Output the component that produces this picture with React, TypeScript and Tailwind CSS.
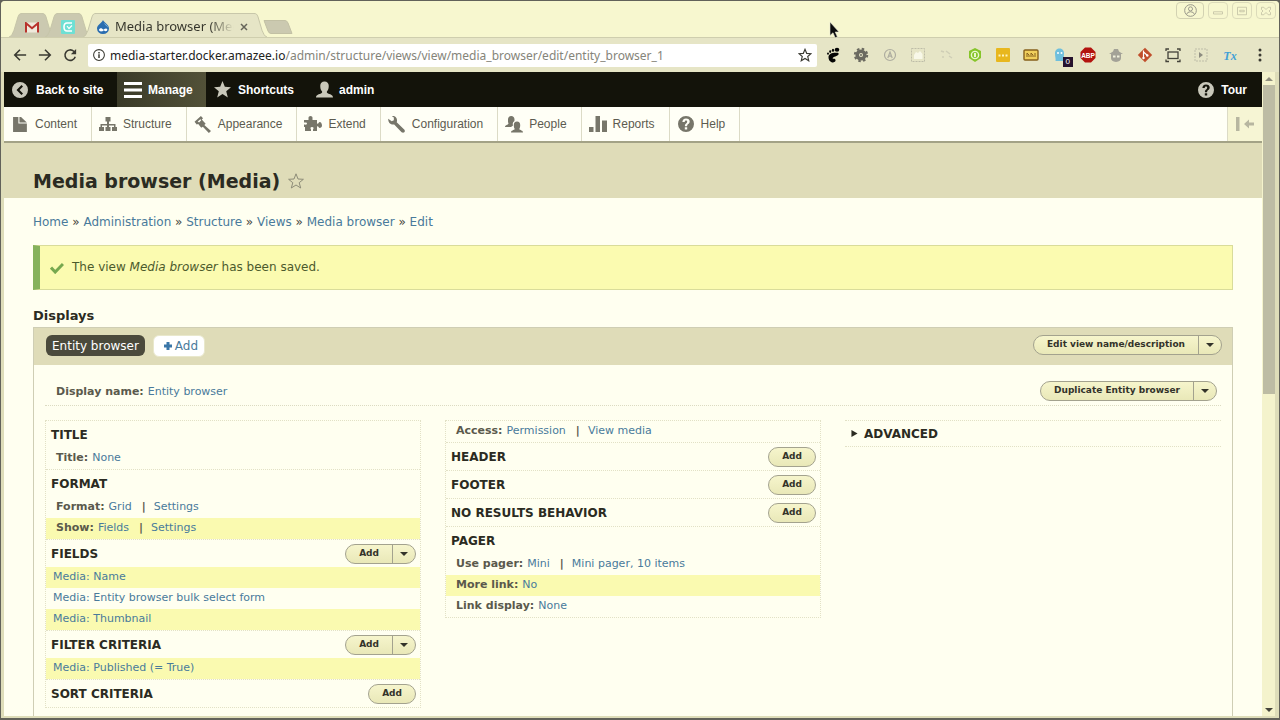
import type { ReactNode } from "react";

type IconProps = { children: ReactNode; className?: string; box?: string };

function Svg({ children, className = "size-4", box = "0 0 16 16" }: IconProps) {
  return (
    <svg viewBox={box} className={`${className} shrink-0`} fill="currentColor" aria-hidden="true">
      {children}
    </svg>
  );
}

function TabShape({ width, fill }: { width: number; fill: string }) {
  return (
    <svg
      viewBox={`0 0 ${width} 25`}
      preserveAspectRatio="none"
      className="absolute inset-0 size-full"
      aria-hidden="true"
    >
      <path
        d={`M0 25 C3 24 3 22 5 18 L9 4 C10 1 11 .5 13 .5 H${width - 13} C${width - 11} .5 ${width - 10} 1 ${width - 9} 4 L${width - 5} 18 C${width - 3} 22 ${width - 3} 24 ${width} 25`}
        fill={fill}
        stroke="#c6c5a8"
      />
    </svg>
  );
}

function TabStrip() {
  return (
    <div className="flex h-[37px] items-end border-b border-[#cfceae] bg-[#f7f7cf] pl-2">
      <button aria-label="Gmail" className="relative flex h-6 w-[46px] items-center justify-center pt-1">
        <TabShape width={46} fill="#cbc9b0" />
        <Svg className="relative h-[11px] w-[14px]" box="0 0 14 11">
          <rect x=".5" y=".5" width="13" height="10" rx="1" fill="#efe9dc" />
          <path d="M1 10.500V1.200L7 6.300L13 1.200V10.500" fill="none" stroke="#b8322c" strokeWidth="2" />
        </Svg>
      </button>
      <button aria-label="Chat" className="relative -ml-2.5 flex h-6 w-[46px] items-center justify-center pt-1">
        <TabShape width={46} fill="#cbc9b0" />
        <Svg className="relative size-[14px]" box="0 0 14 14">
          <rect width="14" height="14" rx="1" fill="#6fe0d4" />
          <path d="M11 3H6Q3 3 3 7T6 11H11" fill="none" stroke="#fff" strokeWidth="1.600" />
          <path d="M6 6l2 2.500L11 5.500" fill="none" stroke="#fff" strokeWidth="1.200" />
        </Svg>
      </button>
      <div className="relative -ml-2 flex h-6 w-[184px] items-center pt-1 pl-[13px] font-['Noto_Sans',sans-serif]">
        <TabShape width={184} fill="#e6e5c6" />
        <Svg className="relative size-[14px]" box="0 0 14 14">
          <path d="M7 0C8 2.500 13 4.500 13 8.500A6 5.500 0 0 1 1 8.500C1 5 6 3 7 0Z" fill="#2a6db0" />
          <path d="M3 9.500c1.500-2 3-1 4.500.3C9 8.500 10.500 8 11.300 9.300c.3 2-2 2.500-3.500 1C6.300 12 3 12 3 9.500Z" fill="#fff" />
          <path d="M8 2.500c1 2 4 3 4.300 5.200C10.500 5.500 8.500 5 8 2.500Z" fill="#8fc0e6" />
        </Svg>
        <span className="relative ml-[5px] bg-linear-to-r from-[#33332a] from-75% to-transparent to-95% bg-clip-text text-[13px] whitespace-nowrap text-transparent">
          Media browser (Med
        </span>
        <button aria-label="Close tab" className="relative mr-5 ml-auto text-[#66655a]">
          <Svg className="size-2">
            <path d="M2 2L14 14M14 2L2 14" stroke="currentColor" strokeWidth="3" />
          </Svg>
        </button>
      </div>
      <button aria-label="New tab" className="mb-[3px] -ml-1 h-3.5 w-[30px]">
        <svg viewBox="0 0 30 14" className="size-full" aria-hidden="true">
          <path d="M1 .5H22Q24 .5 25 3L29 13.500H8Q6 13.500 5 11Z" fill="#cbc9b0" stroke="#c2c0a4" />
        </svg>
      </button>
      <div className="mb-[18px] ml-auto flex gap-1 self-end pr-[3px] text-[#bdbca0]">
        <button aria-label="Profile" className="flex h-[17px] w-7 items-center justify-center rounded-sm border border-[#d3d2b2]">
          <Svg className="size-[13px] text-[#98978a]">
            <circle cx="8" cy="8" r="7.200" fill="none" stroke="currentColor" strokeWidth="1.200" />
            <circle cx="8" cy="6" r="2.500" fill="none" stroke="currentColor" strokeWidth="1.200" />
            <path d="M3 13Q4 9.500 8 9.500T13 13" fill="none" stroke="currentColor" strokeWidth="1.200" />
          </Svg>
        </button>
        <button aria-label="Minimize" className="flex h-[17px] w-5 items-center justify-center rounded-sm border border-[#dcdbba]">
          <Svg className="size-3"><path d="M2 9h12v3H2Z" fill="none" stroke="currentColor" /></Svg>
        </button>
        <button aria-label="Maximize" className="flex h-[17px] w-5 items-center justify-center rounded-sm border border-[#dcdbba]">
          <Svg className="size-3"><path d="M2 3h12v10H2Zm3 4h6v2H5Z" fill="none" stroke="currentColor" /></Svg>
        </button>
        <button aria-label="Close window" className="flex h-[17px] w-5 items-center justify-center rounded-sm border border-[#dcdbba]">
          <Svg className="size-3"><path d="M2 3h3l3 3 3-3h3v3l-2 2 2 2v3h-3l-3-3-3 3H2v-3l2-2-2-2Z" fill="none" stroke="currentColor" /></Svg>
        </button>
      </div>
    </div>
  );
}

const extensions: { name: string; art: ReactNode }[] = [
  {
    name: "Footprint",
    art: (
      <g fill="#050505">
        <path d="M12 5.800C8 5.300 3.500 6.800 3.500 10s2 5.500 4.500 5.500c2.300 0 3.200-2.200 2.200-3.200s-2.500.2-2.500-1.100S13 9.300 13.500 7.600 13 5.900 12 5.800Z" />
        <ellipse cx="12" cy="2.700" rx="2.300" ry="2" />
        <ellipse cx="8" cy="3.300" rx="1.200" ry="1.500" />
        <ellipse cx="5.200" cy="4.600" rx="1" ry="1.400" />
        <ellipse cx="3" cy="6.600" rx=".9" ry="1.200" />
      </g>
    ),
  },
  {
    name: "Settings",
    art: (
      <g fill="none" stroke="#6b6a60">
        <circle cx="8" cy="8" r="3.800" strokeWidth="3.600" />
        <circle cx="8" cy="8" r="6.200" strokeWidth="2" strokeDasharray="2.500 2.370" />
        <circle cx="8" cy="8" r="1" fill="#6b6a60" stroke="none" />
      </g>
    ),
  },
  {
    name: "Accessibility",
    art: (
      <g fill="none" stroke="#aeada0" strokeWidth="1.200">
        <circle cx="8" cy="8" r="5.500" />
        <path d="M5.800 11L8 5l2.200 6M6.500 9.200h3" />
      </g>
    ),
  },
  {
    name: "Blocked",
    art: (
      <g>
        <rect x="1.500" y="1.500" width="13" height="13" fill="none" stroke="#bebda8" strokeDasharray="2 1" />
        <path d="M4 12V8l2-3 2 1 2-2 2.500 3v5Z" fill="#f8f8e8" />
      </g>
    ),
  },
  {
    name: "Pointer",
    art: <path d="M3 4l3 1M8 4l4 3M11 9l3 2M4 10h2" fill="none" stroke="#cfceb6" strokeWidth="1.500" />,
  },
  {
    name: "Cube",
    art: (
      <g>
        <path d="M8 1l6 3v7l-6 4-6-4V4Z" fill="#86c52a" />
        <circle cx="8" cy="8" r="3.600" fill="none" stroke="#e9f6cf" strokeWidth="1.400" />
        <path d="M8 6v4" stroke="#e9f6cf" strokeWidth="2" />
      </g>
    ),
  },
  {
    name: "Passwords",
    art: (
      <g>
        <rect x="1" y="1" width="14" height="14" rx="1" fill="#e8b71d" />
        <path d="M3.500 7.500h2v2h-2zM7 7.500h2v2H7zM10.500 7.500h2v2h-2z" fill="#fff3bd" />
      </g>
    ),
  },
  {
    name: "Meter",
    art: (
      <g stroke="#86601c">
        <rect x="1" y="3" width="14" height="10" rx="1" fill="#f0cf5c" strokeWidth="1.400" />
        <path d="M4 10V6l2 2v2m2 0V6l2 2v2M12 6v4" fill="none" />
      </g>
    ),
  },
  {
    name: "Ghost",
    art: (
      <g>
        <path d="M3.500 14C4 12 3 10 3 6.500 3 3 5 1.500 7.500 1.500S12 3 12 6.500 11 12 12.500 14Z" fill="#6fbfdd" />
        <circle cx="6" cy="6" r="1" fill="#fff" />
        <circle cx="9.500" cy="6" r="1" fill="#fff" />
      </g>
    ),
  },
  {
    name: "ABP",
    art: (
      <g>
        <path d="M5 .5h6L15.500 5v6L11 15.500H5L.5 11V5Z" fill="#b3130f" />
        <text x="8" y="10.500" textAnchor="middle" fontSize="6.500" fontWeight="bold" fill="#fff" fontFamily="Liberation Sans">
          ABP
        </text>
      </g>
    ),
  },
  {
    name: "Agent",
    art: (
      <g fill="#a3a297">
        <path d="M5 4.500l1-2.500h4l1 2.500 4 2.500H1Z" />
        <path d="M3 7h10v4q0 3.500-5 4-5-.5-5-4Z" />
        <path d="M5 8.500h2.500v2H5zM9 8.500h2.500v2H9z" fill="#f0f0dc" />
      </g>
    ),
  },
  {
    name: "Git",
    art: (
      <g>
        <path d="M8 .8L15.200 8 8 15.200.8 8Z" fill="#c04e2c" />
        <path d="M6.500 3.500v8M6.500 5l4 3.500" stroke="#fff" strokeWidth="1.200" />
        <circle cx="6.500" cy="11" r="1.200" fill="#fff" />
        <circle cx="10.300" cy="8.500" r="1.200" fill="#fff" />
      </g>
    ),
  },
  {
    name: "Resize",
    art: (
      <g fill="none" stroke="#44433a" strokeWidth="1.300">
        <rect x="3" y="5" width="10" height="6.500" />
        <path d="M1 4V2h3M12 2h3v2M15 12.500v2h-3M4 14.500H1v-2" />
      </g>
    ),
  },
  {
    name: "Play",
    art: (
      <g>
        <rect x="2" y="2" width="12" height="12" fill="none" stroke="#bebda8" strokeDasharray="2 1" />
        <path d="M6 5l4 3-4 3Z" fill="#8d8c80" />
      </g>
    ),
  },
  {
    name: "Tx",
    art: (
      <text x="8" y="12.500" textAnchor="middle" fontSize="12" fontStyle="italic" fontWeight="bold" fill="#42a0d6" fontFamily="Liberation Serif">
        Tx
      </text>
    ),
  },
];

function AddressBar() {
  return (
    <div className="flex h-[34px] items-center bg-[#e6e5c6] pl-3 text-[#3a3a32]">
      <div className="flex gap-[11px]">
        <button aria-label="Back">
          <Svg className="size-3.5">
            <path d="M15 8H2M8 2L2 8l6 6" fill="none" stroke="currentColor" strokeWidth="1.800" />
          </Svg>
        </button>
        <button aria-label="Forward">
          <Svg className="size-3.5">
            <path d="M1 8h13M8 2l6 6-6 6" fill="none" stroke="currentColor" strokeWidth="1.800" />
          </Svg>
        </button>
        <button aria-label="Reload">
          <Svg className="size-3.5">
            <path d="M14 10a6 6 0 1 1-1.700-6.300L14 5.500" fill="none" stroke="currentColor" strokeWidth="1.800" />
            <path d="M15 1v6H9Z" />
          </Svg>
        </button>
      </div>
      <div className="ml-[11px] flex h-[23px] min-w-0 flex-1 items-center rounded-xs bg-white pr-[5px] pl-[5px]">
        <Svg className="size-3">
          <circle cx="8" cy="8" r="7.200" fill="none" stroke="currentColor" strokeWidth="1.400" />
          <path d="M7 7h2v5H7zM7 4h2v2H7z" />
        </Svg>
        <div className="ml-[5px] flex-1 overflow-hidden pt-px font-['Noto_Sans',sans-serif] text-[12px] leading-5 whitespace-nowrap text-[#85847a]">
          <span className="text-[#22221c]">media-starter.docker.amazee.io</span>
          /admin/structure/views/view/media_browser/edit/entity_browser_1
        </div>
        <button aria-label="Bookmark this page">
          <Svg className="size-3.5">
            <path d="M8 1.500l1.900 4.600 5 .4-3.800 3.200 1.200 4.800L8 11.900l-4.300 2.600 1.200-4.800L1.100 6.500l5-.4Z" fill="none" stroke="currentColor" strokeWidth="1.300" />
          </Svg>
        </button>
      </div>
      <div className="ml-2 flex w-[413px] shrink-0 items-center justify-between">
        {extensions.map((e) => (
          <button key={e.name} aria-label={e.name} className="relative flex h-[18px] w-4 items-center justify-center">
            <Svg>{e.art}</Svg>
            {e.name === "Ghost" && (
              <span className="absolute top-[11px] left-[11px] flex h-[10px] w-[10px] items-center justify-center bg-[#25122e] font-['Liberation_Sans',sans-serif] text-[8px] leading-none text-white">
                0
              </span>
            )}
          </button>
        ))}
      </div>
      <button aria-label="Menu" className="mr-3 ml-[15px] flex w-[14px] justify-center">
        <Svg className="h-3.5 w-1" box="0 0 4 14">
          <circle cx="2" cy="2" r="1.500" />
          <circle cx="2" cy="7" r="1.500" />
          <circle cx="2" cy="12" r="1.500" />
        </Svg>
      </button>
    </div>
  );
}

function HelpIcon() {
  return (
    <Svg>
      <path
        fillRule="evenodd"
        d="M8 0a8 8 0 1 0 0 16A8 8 0 0 0 8 0ZM6.800 13.500v-2.200h2.400v2.200Zm2.300-3.300H6.900c0-3 2.300-2.800 2.300-4.500 0-.8-.5-1.200-1.200-1.200-.9 0-1.300.7-1.300 1.600H4.400C4.400 4 5.700 2.500 8 2.500s3.700 1.200 3.700 3.100c0 2.400-2.600 2.500-2.600 4.600Z"
      />
    </Svg>
  );
}

function AdminBar() {
  const item = "flex items-center px-2 whitespace-nowrap";
  return (
    <nav aria-label="Toolbar" className="flex h-[35px] items-stretch bg-[#13130a] font-['Liberation_Sans',Arial,sans-serif] text-[12px] font-bold text-white">
      <a href="#site" className={`${item} w-[113px] shrink-0 gap-2`}>
        <Svg className="size-4 text-[#c9c8ba]">
          <path fillRule="evenodd" d="M8 0a8 8 0 1 0 0 16A8 8 0 0 0 8 0Zm1.500 3L11 4.500 7.500 8l3.500 3.500L9.500 13 4.500 8Z" />
        </Svg>
        Back to site
      </a>
      <a href="#manage" className={`${item} w-[89px] shrink-0 gap-1.5 bg-linear-to-r from-[#3a3a28] to-[#525138] pl-[7px]`}>
        <Svg className="h-4 w-[18px]" box="0 0 18 16">
          <path d="M0 0h18v3H0zM0 6.500h18v3H0zM0 13h18v3H0z" />
        </Svg>
        Manage
      </a>
      <a href="#shortcuts" className={`${item} w-[102px] shrink-0 gap-[7px]`}>
        <Svg className="size-[17px] text-[#c9c8ba]">
          <path d="M8 0l2.200 5.500 5.800.4-4.500 3.800L13 15.500 8 12.300 3 15.500l1.500-5.800L0 5.900l5.800-.4Z" />
        </Svg>
        Shortcuts
      </a>
      <a href="#user" className={`${item} gap-1.5`}>
        <Svg className="size-[17px] text-[#c9c8ba]">
          <path d="M0 15.500c0-2.500 3-3 5-4 1-.5 1-1.300.4-2C4.300 8.300 4 6.500 4 4.500 4 2 5.500.5 8 .5s4 1.500 4 4c0 2-.3 3.800-1.400 5-.6.700-.6 1.500.4 2 2 1 5 1.500 5 4Z" />
        </Svg>
        admin
      </a>
      <a href="#tour" className="ml-auto flex items-center gap-[7px] pr-[15px]">
        <span className="text-[#c9c8ba]">
          <HelpIcon />
        </span>
        Tour
      </a>
    </nav>
  );
}

const menuItems: { label: string; icon: ReactNode }[] = [
  {
    label: "Content",
    icon: (
      <Svg className="size-[17px]">
        <path d="M1 1h5v6h8v8H1Z" />
        <path d="M7 1h1.500L14 6H7Z" />
      </Svg>
    ),
  },
  {
    label: "Structure",
    icon: (
      <Svg className="h-4 w-[18px]" box="0 0 18 16">
        <path d="M6.500 1h5v4.500H10V8h6.500v3H18v4h-5v-4h2V9.500h-5V11h1.500v4h-5v-4H8V9.500H3V11h2v4H0v-4h1.500V8H8V5.500H6.500Z" />
      </Svg>
    ),
  },
  {
    label: "Appearance",
    icon: (
      <Svg className="size-[17px]">
        <path fillRule="evenodd" d="M.5 5.500L6.500 0l2 2-1.200 1.300L11 7.200l-1.300 1.300L16 14l-2 2-5.700-6-1.500 1L4 7.500 2.500 8Zm3-.3l1.300.8 2-2L6 3Z" />
      </Svg>
    ),
  },
  {
    label: "Extend",
    icon: (
      <Svg className="h-4 w-[18px]" box="0 0 18 16">
        <path d="M4.500 4V1.500Q4.500 0 6.500 0t2 1.500V4H13v3.500q1.200.5 1.500-.5 1-1.500 2.500-.5 1 1.500 1 3t-1 2q-1.500 1-2.500-.5-.3-1-1.500-.5V15H9v-1.500Q10.500 11 8 11t-1 2.500V15H1v-4H0V8.500h1q2 .5 2-1t-2-1H0V4Z" />
      </Svg>
    ),
  },
  {
    label: "Configuration",
    icon: (
      <Svg className="size-[17px]">
        <path d="M.2 2.500L3.500 5l2-1L5.500 1.500 3.500 0C6 -.5 8.500 1 8.500 4c0 .7 0 1.200-.3 1.800L15.500 13q.8 1.500-.2 2.400t-2.500 0L5.800 8C3 8.500 0 7 .2 2.500Z" />
      </Svg>
    ),
  },
  {
    label: "People",
    icon: (
      <Svg className="h-[17px] w-[18px]" box="0 0 18 17">
        <path d="M0 11c0-2 3-2 3.500-3.500C2.800 6 3 5 3 3.500 3 1.500 4.200 0 6.200 0s3.300 1.500 3.300 3.500c0 .6 0 1.200-.2 1.700C7.800 6 7.500 7.500 8 9.500L6 11Z" />
        <path d="M6 16.500c0-2.500 3-2 3.800-3.500-.8-1-1-2.500-1-4 0-2 1-3.500 3.200-3.500s3.200 1.500 3.200 3.500c0 1.500-.2 3-1 4 .8 1.500 3.800 1 3.800 3.500Z" />
      </Svg>
    ),
  },
  {
    label: "Reports",
    icon: (
      <Svg className="h-4 w-[18px]" box="0 0 18 16">
        <path d="M0 11h4.500v5H0zM6.500 0H11v16H6.500zM13 4.500h5V16h-5z" />
      </Svg>
    ),
  },
  { label: "Help", icon: <HelpIcon /> },
];

function MenuBar() {
  return (
    <nav aria-label="Administration menu" className="flex h-[36px] items-stretch border-b-2 border-[#a3a286] bg-[#fffff6] font-['Liberation_Sans',Arial,sans-serif] text-[12px] text-[#5c5b50]">
      {menuItems.map((m) => (
        <a key={m.label} href={`#${m.label.toLowerCase()}`} className="flex items-center gap-[6px] border-r border-[#dcdbc6] pr-3.5 pl-[7px]">
          <span className="flex w-[18px] justify-center text-[#77766a]">{m.icon}</span>
          {m.label}
        </a>
      ))}
      <button aria-label="Vertical orientation" className="ml-auto flex w-[35px] items-center justify-center border-l border-[#dcdbc6] bg-[#f6f5d4] text-[#b7b6a0]">
        <Svg className="h-3.5 w-[18px]" box="0 0 18 14">
          <path d="M0 0h3.500v14H0zM8 7l5-4.500v3h5v3h-5v3Z" />
        </Svg>
      </button>
    </nav>
  );
}

const link = "text-[#497a9b]";

function Caret() {
  return (
    <Svg className="h-1 w-2" box="0 0 8 4">
      <path d="M0 0h8L4 4Z" />
    </Svg>
  );
}

function PillButton({ label, split = false }: { label: string; split?: boolean }) {
  return (
    <div className="flex h-5 shrink-0 items-stretch overflow-hidden rounded-full border border-[#a3a28e] bg-linear-to-b from-[#f6f5cc] to-[#e9e8b8] text-[9px] font-bold text-[#33332a]">
      <button className="px-[13px]">{label}</button>
      {split && (
        <button aria-label={`More actions: ${label}`} className="flex w-[23px] items-center justify-center border-l border-[#a3a28e]">
          <Caret />
        </button>
      )}
    </div>
  );
}

type Row = { label?: string; links: string[]; shaded?: boolean };
type Section = { title?: string; action?: "add" | "split"; rows: Row[] };

const first: Section[] = [
  { title: "TITLE", rows: [{ label: "Title:", links: ["None"] }] },
  {
    title: "FORMAT",
    rows: [
      { label: "Format:", links: ["Grid", "Settings"] },
      { label: "Show:", links: ["Fields", "Settings"], shaded: true },
    ],
  },
  {
    title: "FIELDS",
    action: "split",
    rows: [
      { links: ["Media: Name"], shaded: true },
      { links: ["Media: Entity browser bulk select form"] },
      { links: ["Media: Thumbnail"], shaded: true },
    ],
  },
  { title: "FILTER CRITERIA", action: "split", rows: [{ links: ["Media: Published (= True)"], shaded: true }] },
  { title: "SORT CRITERIA", action: "add", rows: [] },
];

const second: Section[] = [
  { rows: [{ label: "Access:", links: ["Permission", "View media"] }] },
  { title: "HEADER", action: "add", rows: [] },
  { title: "FOOTER", action: "add", rows: [] },
  { title: "NO RESULTS BEHAVIOR", action: "add", rows: [] },
  {
    title: "PAGER",
    rows: [
      { label: "Use pager:", links: ["Mini", "Mini pager, 10 items"] },
      { label: "More link:", links: ["No"], shaded: true },
      { label: "Link display:", links: ["None"] },
    ],
  },
];

function Column({ sections }: { sections: Section[] }) {
  return (
    <div className="self-start border border-dotted border-[#e2e1c6]">
      {sections.map((s, i) => (
        <section key={i} className="border-b border-dotted border-[#e2e1c6] last:border-b-0">
          {s.title && (
            <div className="flex h-[27px] items-center justify-between pr-1 pl-[5px]">
              <h3 className="text-[12px] font-bold text-[#2b2b22]">{s.title}</h3>
              {s.action && <PillButton label="Add" split={s.action === "split"} />}
            </div>
          )}
          {s.rows.map((r, j) => (
            <div
              key={j}
              className={`flex h-[21px] items-center text-[11px] ${r.label ? "pl-[10px]" : "pl-[7px]"} ${r.shaded ? "bg-[#fafab0]" : ""}`}
            >
              {r.label && <span className="mr-1 font-bold text-[#5a594c]">{r.label}</span>}
              {r.links.map((l, k) => (
                <span key={l} className="flex">
                  {k > 0 && <span className="mr-2 ml-[10px] font-bold text-[#5a594c]">|</span>}
                  <a href="#edit" className={link}>
                    {l}
                  </a>
                </span>
              ))}
            </div>
          ))}
        </section>
      ))}
    </div>
  );
}

const crumbs = ["Home", "Administration", "Structure", "Views", "Media browser", "Edit"];

function Page() {
  return (
    <main className="flex min-h-0 flex-1 flex-col overflow-hidden bg-[#fffff0] font-['DejaVu_Sans',sans-serif]">
      <header className="flex h-[55px] shrink-0 items-end gap-2 bg-[#dfdcb8] px-[29px] pb-[5px]">
        <h1 className="text-[19px] leading-6 font-bold text-[#2b2b22]">Media browser (Media)</h1>
        <button aria-label="Add to shortcuts" className="mb-1 text-[#8d8c78]">
          <Svg>
            <path d="M8 .8l2 5.200 5.400.3-4.200 3.400 1.500 5.300L8 12l-4.700 3 1.500-5.300L.6 6.300 6 6Z" fill="none" stroke="currentColor" />
          </Svg>
        </button>
      </header>
      <div className="px-[29px] pt-4">
        <nav aria-label="Breadcrumb" className="h-4 text-[12px] leading-4 text-[#44443a]">
          {crumbs.map((c, i) => (
            <span key={c}>
              {i > 0 && " » "}
              <a href="#crumb" className={link}>
                {c}
              </a>
            </span>
          ))}
        </nav>
        <div role="status" className="mt-[15px] flex h-[45px] items-center border border-l-[7px] border-[#d9dc9a] border-l-[#86b25c] bg-[#fbfbb0] pl-2.5 text-[12px] text-[#4c5a2c]">
          <Svg className="mr-2 h-3 w-3.5 text-[#76a84e]" box="0 0 14 12">
            <path d="M1 5.500L5.200 10 13 2" fill="none" stroke="currentColor" strokeWidth="3" />
          </Svg>
          <p className="pb-px">
            The view <em>Media browser</em> has been saved.
          </p>
        </div>
        <h2 className="mt-[17px] mb-0.5 text-[13px] leading-[18px] font-bold text-[#2b2b22]">Displays</h2>
        <div className="border border-[#cfceb4]">
          <div className="flex h-[37px] items-center bg-[#dfdcb8] pr-2.5 pb-0.5 pl-3">
            <button className="h-[21px] rounded-md bg-[#4b4a3c] px-1.5 text-[12px] text-white">Entity browser</button>
            <button className={`ml-2 flex h-[22px] items-center gap-0.5 rounded-md border border-[#e9e8cc] bg-white pr-[6px] pl-[9px] text-[12px] ${link}`}>
              <Svg className="size-2.5 text-[#3a76a8]" box="0 0 10 10">
                <path d="M3.500 1h3v2.500H9v3H6.500V9h-3V6.500H1v-3h2.500Z" />
              </Svg>
              Add
            </button>
            <div className="ml-auto pb-0.5">
              <PillButton label="Edit view name/description" split />
            </div>
          </div>
          <div className="px-[11px] pt-[11px] pb-3">
            <div className="flex h-[30px] items-center justify-between border-b border-dotted border-[#dcdbc2] pr-1 pl-[11px] text-[11px]">
              <p className="pt-[3px]">
                <span className="mr-1 font-bold text-[#5a594c]">Display name:</span>
                <a href="#name" className={link}>
                  Entity browser
                </a>
              </p>
              <PillButton label="Duplicate Entity browser" split />
            </div>
            <div className="mt-3.5 grid grid-cols-3 gap-6">
              <Column sections={first} />
              <Column sections={second} />
              <details className="self-start border-y border-dotted border-[#e2e1c6]">
                <summary className="flex h-[25px] items-center gap-1.5 pl-[6px] text-[12px] font-bold text-[#2b2b22]">
                  <Svg className="size-[7px]" box="0 0 7 8">
                    <path d="M0 0l7 4-7 4Z" />
                  </Svg>
                  ADVANCED
                </summary>
              </details>
            </div>
          </div>
          <div className="h-40" />
        </div>
      </div>
    </main>
  );
}

export default function App() {
  return (
    <div className="relative h-screen overflow-hidden bg-[#62625a] pt-px pr-px pb-[2px] pl-px">
      <div className="flex h-full flex-col overflow-hidden rounded-t-sm bg-[#deddb9]">
        <TabStrip />
        <AddressBar />
        <div className="flex min-h-0 flex-1 pr-1 pb-[2px] pl-[3px]">
          <div className="flex min-w-0 flex-1 flex-col">
            <AdminBar />
            <MenuBar />
            <Page />
          </div>
          <div className="flex w-[13px] flex-col items-center bg-[#f4f3cc]">
            <button aria-label="Scroll up" className="flex h-[13px] w-full items-center justify-center text-[#8f8e7e]">
              <Svg className="h-1 w-2" box="0 0 8 4">
                <path d="M0 4h8L4 0Z" />
              </Svg>
            </button>
            <div className="h-[48%] w-3 bg-[#bdbca4]" />
            <button aria-label="Scroll down" className="mt-auto flex h-[13px] w-full items-center justify-center text-[#44443a]">
              <Caret />
            </button>
          </div>
        </div>
      </div>
      <svg viewBox="0 0 12 18" className="absolute top-[22px] left-[829px] h-[18px] w-3" aria-hidden="true">
        <path d="M1 0v13.500l3-2.700 2.200 5 2.200-1-2.200-4.800H10Z" fill="#0c0c0c" stroke="#e8e8d8" strokeWidth=".6" />
      </svg>
    </div>
  );
}
